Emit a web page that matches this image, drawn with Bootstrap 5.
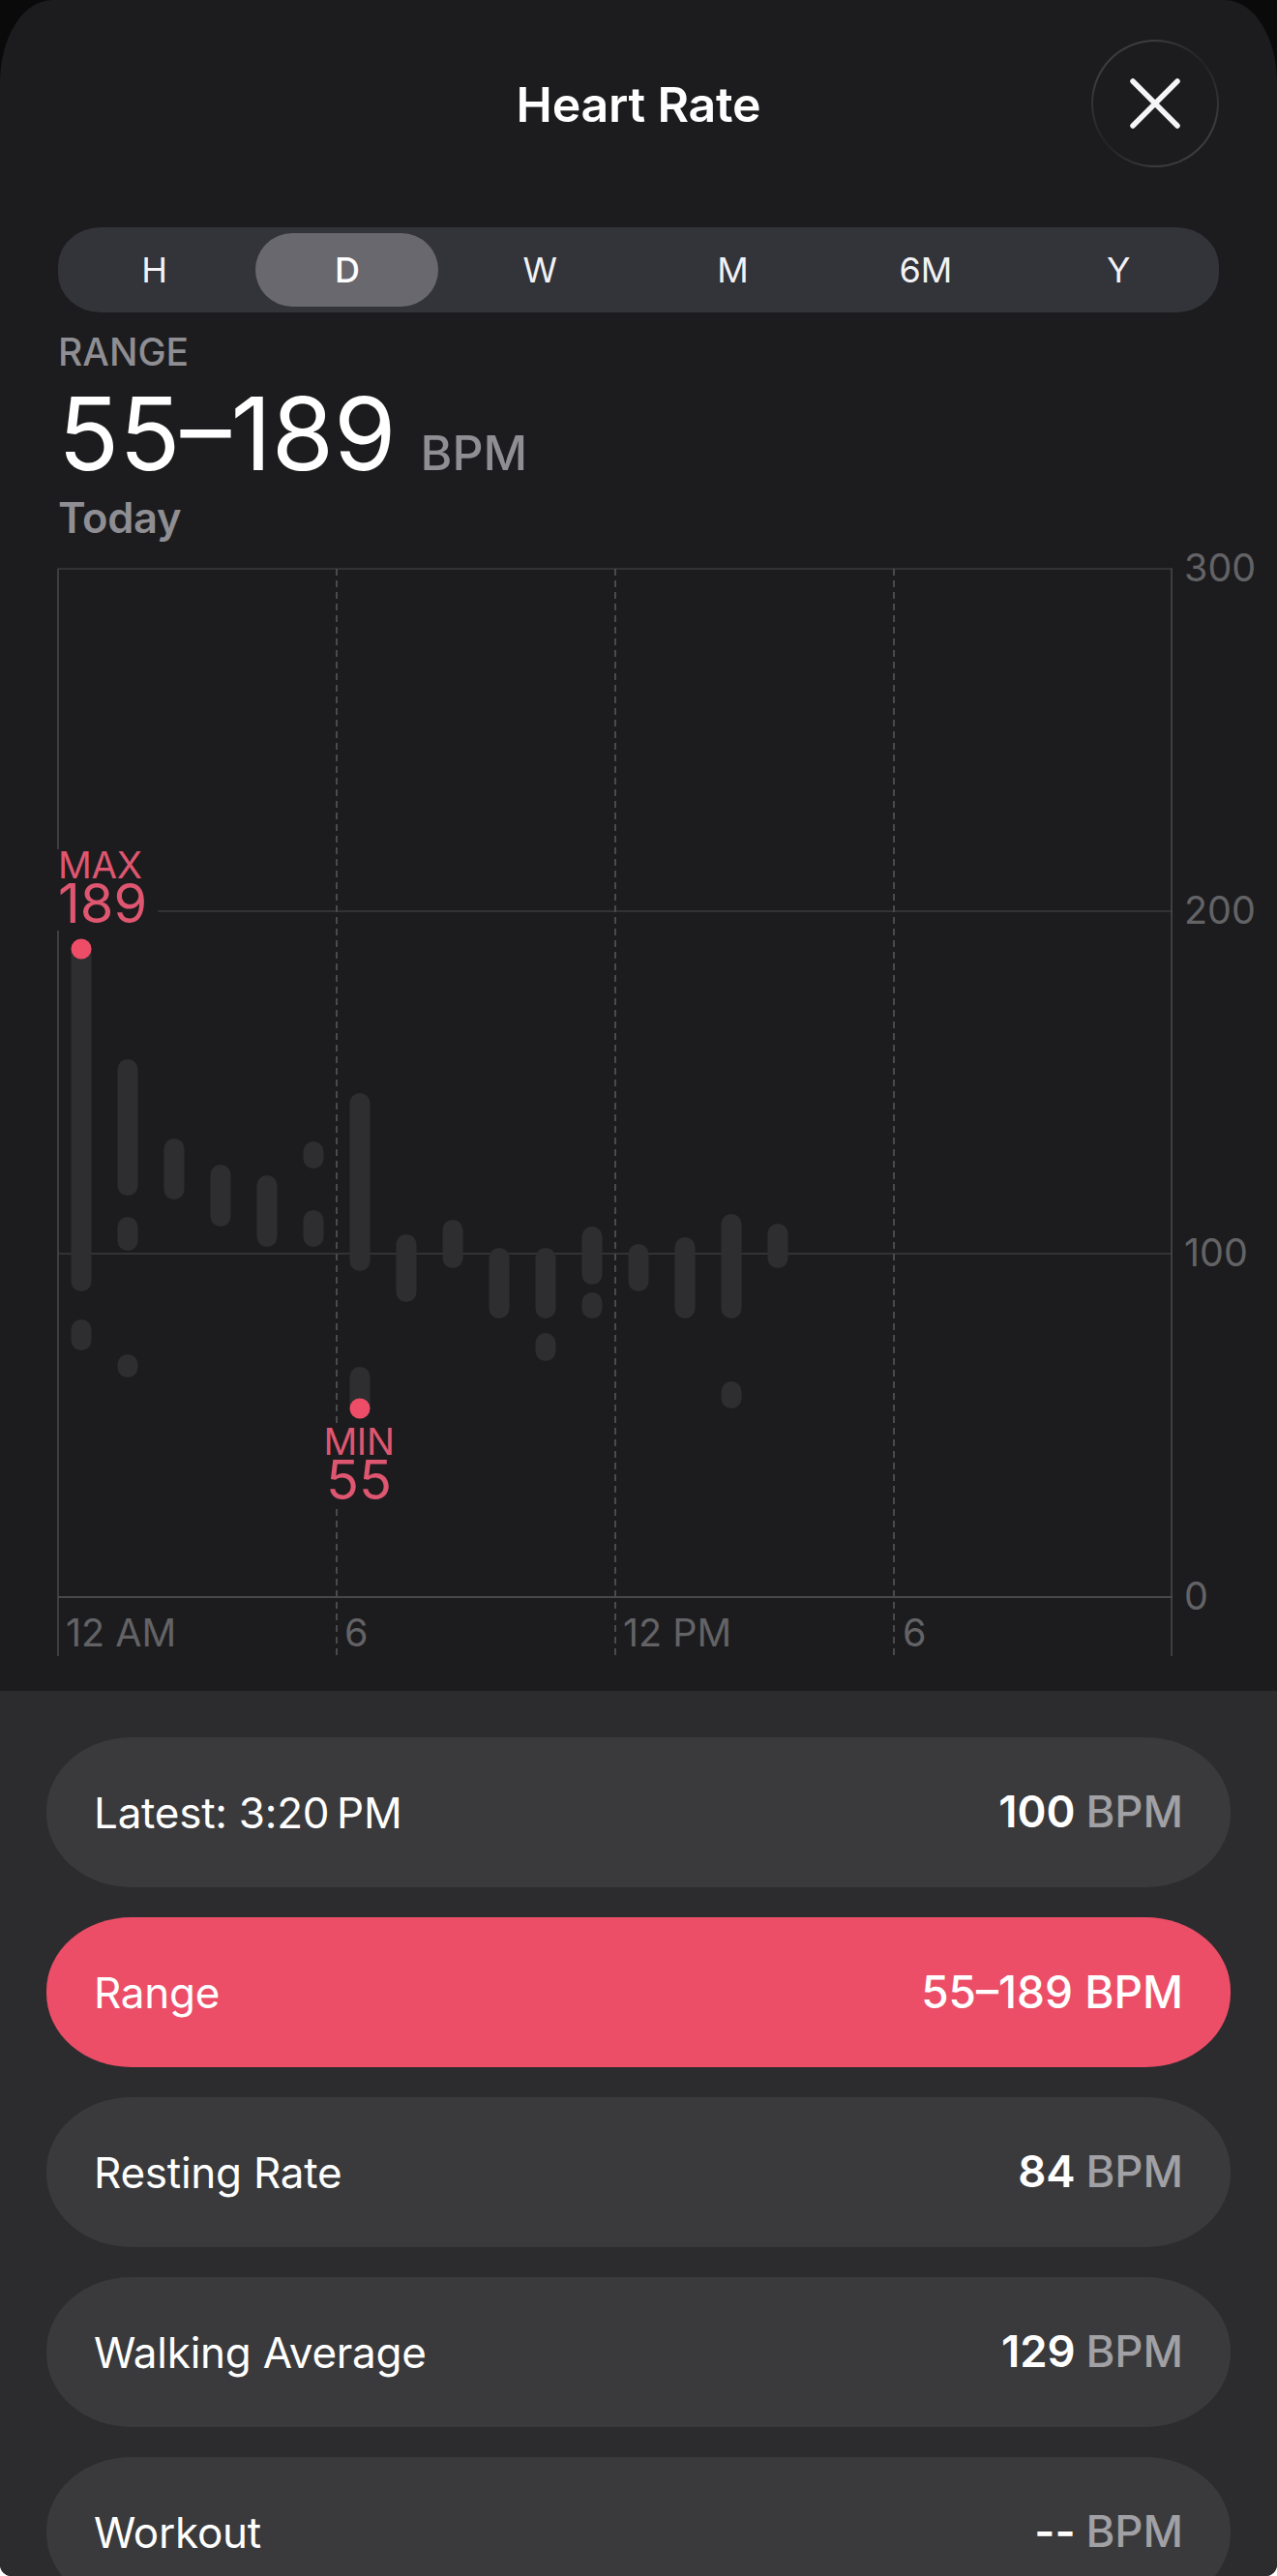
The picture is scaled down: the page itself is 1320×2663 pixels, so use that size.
<!DOCTYPE html>
<html lang="en">
<head>
<meta charset="utf-8">
<title>Heart Rate</title>
<link href="https://cdn.jsdelivr.net/npm/bootstrap@5.3.0/dist/css/bootstrap.min.css" rel="stylesheet">
<style>
:root { --hr-red:#ec4e68; --hr-red-text:#df5670; --hr-sheet:#1c1c1e; }
html, body { background:#fff; margin:0; }
body { font-family:"Inter","Liberation Sans",sans-serif; height:2663px; overflow:hidden; color:#fff; }
.hr-shell { background:#0a0a0b; height:2663px; overflow:hidden; border-radius:0 0 12px 12px; }
.hr-sheet { background:var(--hr-sheet); border-radius:54px 54px 0 0 / 85px 85px 0 0; height:1748px; padding:0 60px; position:relative; }
.hr-head { height:235px; position:relative; }
.hr-title { font-size:50px; font-weight:600; line-height:1; padding-top:83px; letter-spacing:-.2px; text-align:center; }
.hr-close { position:absolute; top:41px; right:0; width:132px; height:132px; border-radius:50%; border:2px solid transparent; background:linear-gradient(#1c1c1e,#1c1c1e) padding-box, conic-gradient(#3c3c3f 0deg,#232325 50deg,#3c3c3f 110deg,#3c3c3f 180deg,#232325 230deg,#3c3c3f 290deg) border-box; padding:0; display:flex; align-items:center; justify-content:center; }
.hr-seg { height:88px; background:#33333a; border-radius:44px / 40px; padding-right:4px; }
.hr-seg-item { width:199.33px; height:76px; font-size:36px; line-height:76px; text-align:center; color:#f2f2f4; }
.hr-seg-item.hr-on { background:#68686e; width:189px; margin:0 5.17px; border-radius:38px; font-weight:500; color:#fff; }
.hr-range-label { color:#8e8e93; font-size:39px; font-weight:500; line-height:1; margin-top:21px; }
.hr-range-value { line-height:1; margin-top:13px; font-size:104px; font-weight:400; height:104px; white-space:nowrap; }
.hr-range-value span { font-size:50px; font-weight:500; color:#8e8e93; margin-left:25px; }
.hr-today { color:#8e8e93; font-size:43.5px; font-weight:600; line-height:1; margin-top:14px; letter-spacing:-.3px; }
.hr-plot { position:absolute; left:0; top:580px; width:1320px; height:1140px; }
.hr-plot svg { position:absolute; left:0; top:0; display:block; }
.hr-axis { position:absolute; font-size:39.5px; line-height:1; color:#636366; }
.hr-note { position:absolute; background:var(--hr-sheet); color:var(--hr-red-text); text-align:center; padding-bottom:4px; }
.hr-note-max { left:58px; top:298px; width:105px; text-align:left; padding-left:2px; }
.hr-note-min { left:326px; top:894px; width:90px; }
.hr-note-a { display:block; font-size:38.5px; line-height:.85; letter-spacing:-.3px; }
.hr-note-b { display:block; font-size:56px; line-height:.85; margin-top:0; }
.hr-panel { background:#2c2c2e; height:915px; padding:48px 48px 0; }
.hr-row { height:155px; border-radius:88px / 76px; background:#3a3a3c; padding:0 49px 0 49px; margin-bottom:31px; font-size:44px; color:#fff; letter-spacing:-.25px; }
.hr-row.hr-active { background:var(--hr-red); }
.hr-val { font-size:45.5px; letter-spacing:0; }
.hr-val b { font-weight:600; }
.hr-unit { color:#a0a0a5; font-weight:500; margin-left:-2px; }
.hr-row.hr-active .hr-val { font-weight:500; font-size:46px; }
</style>
</head>
<body>
<main class="hr-shell">
  <section class="hr-sheet">
    <header class="hr-head">
      <div class="hr-title">Heart Rate</div>
      <button class="hr-close" type="button" aria-label="Close">
        <svg width="60" height="60" viewBox="0 0 60 60"><path d="M7 7 53 53M53 7 7 53" stroke="#f5f5f5" stroke-width="5.5" stroke-linecap="round" fill="none"/></svg>
      </button>
    </header>
    <div class="hr-seg d-flex align-items-center">
      <div class="hr-seg-item">H</div>
      <div class="hr-seg-item hr-on">D</div>
      <div class="hr-seg-item">W</div>
      <div class="hr-seg-item">M</div>
      <div class="hr-seg-item">6M</div>
      <div class="hr-seg-item">Y</div>
    </div>
    <div class="hr-range-label">RANGE</div>
    <div class="hr-range-value">55–189<span>BPM</span></div>
    <div class="hr-today">Today</div>

    <div class="hr-plot">
      <svg width="1320" height="1140" viewBox="0 580 1320 1140">
        <g stroke="#323235" stroke-width="2" fill="none">
          <path d="M60 588H1212"/>
          <path d="M60 942H1212"/>
          <path d="M60 1296H1212"/>
        </g>
        <path d="M60 1651H1212" stroke="#48484a" stroke-width="2"/>
        <g stroke="#4a4a4c" stroke-width="1.5" fill="none">
          <path d="M60 588V1712"/>
          <path d="M1211 588V1712"/>
        </g>
        <g stroke="#4a4a4c" stroke-width="2" stroke-dasharray="7 5" fill="none">
          <path d="M348 588V1712"/>
          <path d="M636 588V1712"/>
          <path d="M924 588V1712"/>
        </g>
        <g fill="#2e2e30">
          <rect x="73.5" y="971" width="21" height="364" rx="10.5"/>
          <rect x="73.5" y="1364" width="21" height="32" rx="10.5"/>
          <rect x="121.5" y="1095" width="21" height="141" rx="10.5"/>
          <rect x="121.5" y="1258" width="21" height="35" rx="10.5"/>
          <rect x="121.5" y="1400" width="21" height="24" rx="10.5"/>
          <rect x="169.5" y="1177" width="21" height="63" rx="10.5"/>
          <rect x="217.5" y="1204" width="21" height="64" rx="10.5"/>
          <rect x="265.5" y="1215" width="21" height="74" rx="10.5"/>
          <rect x="313.5" y="1180" width="21" height="28" rx="10.5"/>
          <rect x="313.5" y="1251" width="21" height="38" rx="10.5"/>
          <rect x="361.5" y="1130" width="21" height="184" rx="10.5"/>
          <rect x="361.5" y="1413" width="21" height="54" rx="10.5"/>
          <rect x="409.5" y="1276" width="21" height="70" rx="10.5"/>
          <rect x="457.5" y="1261" width="21" height="50" rx="10.5"/>
          <rect x="505.5" y="1290" width="21" height="73" rx="10.5"/>
          <rect x="553.5" y="1290" width="21" height="73" rx="10.5"/>
          <rect x="553.5" y="1378" width="21" height="29" rx="10.5"/>
          <rect x="601.5" y="1268" width="21" height="60" rx="10.5"/>
          <rect x="601.5" y="1336" width="21" height="27" rx="10.5"/>
          <rect x="649.5" y="1286" width="21" height="49" rx="10.5"/>
          <rect x="697.5" y="1279" width="21" height="84" rx="10.5"/>
          <rect x="745.5" y="1255" width="21" height="108" rx="10.5"/>
          <rect x="745.5" y="1428" width="21" height="28" rx="10.5"/>
          <rect x="793.5" y="1265" width="21" height="46" rx="10.5"/>
        </g>
        <circle cx="84" cy="981" r="10.5" fill="#ee4d68"/>
        <circle cx="372" cy="1456" r="10.5" fill="#ee4d68"/>
      </svg>

      <div class="hr-note hr-note-max">
        <span class="hr-note-a">MAX</span><span class="hr-note-b">189</span>
      </div>
      <div class="hr-note hr-note-min">
        <span class="hr-note-a">MIN</span><span class="hr-note-b">55</span>
      </div>

      <div class="hr-axis" style="left:1224px;top:-12px">300</div>
      <div class="hr-axis" style="left:1224px;top:342px">200</div>
      <div class="hr-axis" style="left:1224px;top:696px">100</div>
      <div class="hr-axis" style="left:1224px;top:1051px">0</div>
      <div class="hr-axis" style="left:68px;top:1089px">12 AM</div>
      <div class="hr-axis" style="left:356px;top:1089px">6</div>
      <div class="hr-axis" style="left:644px;top:1089px">12 PM</div>
      <div class="hr-axis" style="left:933px;top:1089px">6</div>
    </div>
  </section>

  <section class="hr-panel">
    <div class="hr-row d-flex justify-content-between align-items-center"><span>Latest: 3:20&#8239;PM</span><span class="hr-val"><b>100</b> <span class="hr-unit">BPM</span></span></div>
    <div class="hr-row hr-active d-flex justify-content-between align-items-center"><span>Range</span><span class="hr-val">55–189 BPM</span></div>
    <div class="hr-row d-flex justify-content-between align-items-center"><span>Resting Rate</span><span class="hr-val"><b>84</b> <span class="hr-unit">BPM</span></span></div>
    <div class="hr-row d-flex justify-content-between align-items-center"><span>Walking Average</span><span class="hr-val"><b>129</b> <span class="hr-unit">BPM</span></span></div>
    <div class="hr-row d-flex justify-content-between align-items-center"><span>Workout</span><span class="hr-val"><b>--</b> <span class="hr-unit">BPM</span></span></div>
  </section>
</main>
<script src="https://cdn.jsdelivr.net/npm/bootstrap@5.3.0/dist/js/bootstrap.bundle.min.js"></script>
</body>
</html>
